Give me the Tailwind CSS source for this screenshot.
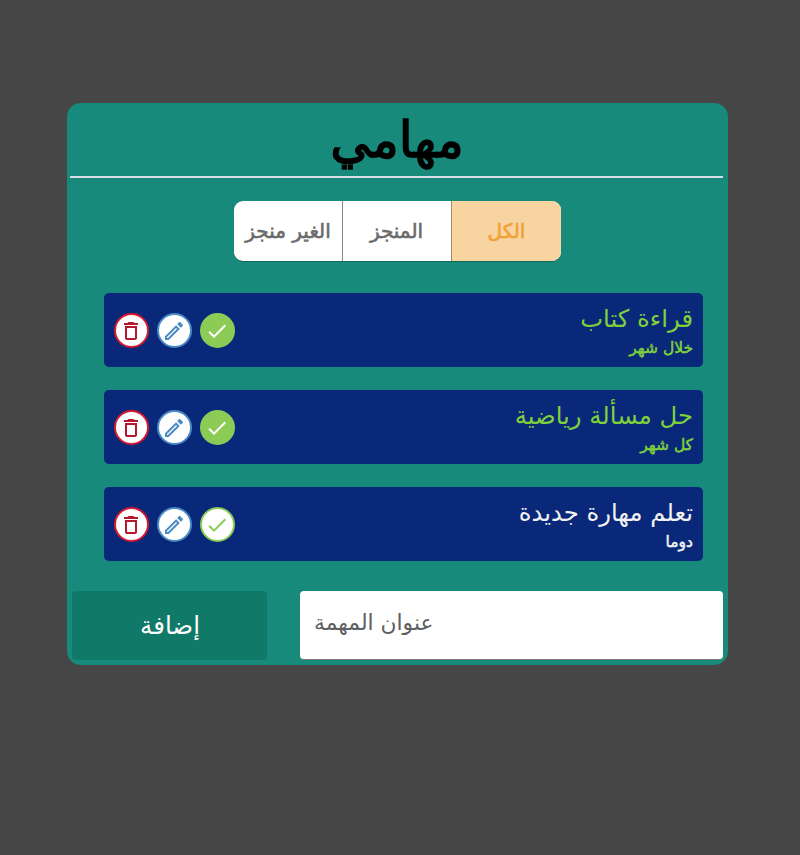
<!DOCTYPE html>
<html lang="ar">
<head>
<meta charset="utf-8">
<title>مهامي</title>
<script src="https://cdn.jsdelivr.net/npm/@tailwindcss/browser@4"></script>
</head>
<body class="h-[855px] overflow-hidden bg-[#464646] pt-[103px] pl-[67px] font-['DejaVu_Sans',sans-serif]">
<svg class="hidden">
  <symbol id="trash" viewBox="0 0 24 24"><path d="M6 19c0 1.1.9 2 2 2h8c1.1 0 2-.9 2-2V7H6v12zM8 9h8v10H8V9zm7.5-5l-1-1h-5l-1 1H5v2h14V4z"/></symbol>
  <symbol id="pencil" viewBox="0 0 24 24"><path d="M14.06 9.02l.92.92L5.92 19H5v-.92l9.06-9.06M17.66 3c-.25 0-.51.1-.7.29l-1.83 1.83 3.75 3.75 1.83-1.83c.39-.39.39-1.02 0-1.41l-2.34-2.34c-.2-.2-.45-.29-.71-.29zm-3.6 3.19L3 17.25V21h3.75L17.81 9.94l-3.75-3.75z"/></symbol>
  <symbol id="check" viewBox="0 0 24 24"><path d="M9 16.17 4.83 12l-1.42 1.41L9 19 21 7l-1.41-1.41z"/></symbol>
</svg>
<main class="flex h-[562px] w-[661px] flex-col rounded-[14px] bg-[#178a7b]">
  <h1 dir="rtl" class="mr-[5px] ml-[3px] h-[75px] border-b-2 border-[#dcdce6] pl-px text-center text-[50px] leading-[74px] text-black [-webkit-text-stroke:1.5px_#000]">مهامي</h1>
  <div class="mt-[23px] ml-[167px] flex h-[60px] w-[327px] overflow-hidden rounded-[9px] bg-white text-[20px] text-[#6b6b6b] shadow-[0_1px_0_rgba(0,0,0,0.25)] [-webkit-text-stroke:0.6px_currentColor]">
    <button dir="rtl" class="w-[108px] whitespace-nowrap">الغير منجز</button>
    <button dir="rtl" class="w-[109px] border-l border-[#858585] pr-px">المنجز</button>
    <button dir="rtl" class="w-[110px] border-l border-[#a58a68] bg-[#f8d4a1] text-[#f0a236]">الكل</button>
  </div>
  <ul class="mt-8 ml-[37px] flex w-[599px] flex-col gap-[23px]">
    <li class="flex h-[74px] items-center justify-between rounded-[5px] bg-[#0a2879] pr-[10px] pl-[10px] text-[#7fd13b]">
      <div class="flex gap-2">
        <button class="rounded-full border-2 border-[#d8192f] bg-white pt-1 pr-1 pb-[3px] pl-[3px]"><svg class="size-6 fill-[#b5172f]"><use href="#trash"/></svg></button>
        <button class="rounded-full border-2 border-[#4a8ac4] bg-white pt-1 pr-1 pb-[3px] pl-[3px]"><svg class="size-6 fill-[#4a8ac4]"><use href="#pencil"/></svg></button>
        <button class="rounded-full border-2 border-[#8bcb56] bg-[#8bcb56] pt-1 pr-1 pb-[3px] pl-[3px]"><svg class="size-6 fill-white"><use href="#check"/></svg></button>
      </div>
      <div dir="rtl" class="pt-[2px]">
        <h2 class="text-[24.3px] leading-[34px]">قراءة كتاب</h2>
        <p class="text-[15.5px] leading-6 [-webkit-text-stroke:0.5px_currentColor]">خلال شهر</p>
      </div>
    </li>
    <li class="flex h-[74px] items-center justify-between rounded-[5px] bg-[#0a2879] pr-[10px] pl-[10px] text-[#7fd13b]">
      <div class="flex gap-2">
        <button class="rounded-full border-2 border-[#d8192f] bg-white pt-1 pr-1 pb-[3px] pl-[3px]"><svg class="size-6 fill-[#b5172f]"><use href="#trash"/></svg></button>
        <button class="rounded-full border-2 border-[#4a8ac4] bg-white pt-1 pr-1 pb-[3px] pl-[3px]"><svg class="size-6 fill-[#4a8ac4]"><use href="#pencil"/></svg></button>
        <button class="rounded-full border-2 border-[#8bcb56] bg-[#8bcb56] pt-1 pr-1 pb-[3px] pl-[3px]"><svg class="size-6 fill-white"><use href="#check"/></svg></button>
      </div>
      <div dir="rtl" class="pt-[2px]">
        <h2 class="text-[24.3px] leading-[34px]">حل مسألة رياضية</h2>
        <p class="text-[15.5px] leading-6 [-webkit-text-stroke:0.5px_currentColor]">كل شهر</p>
      </div>
    </li>
    <li class="flex h-[74px] items-center justify-between rounded-[5px] bg-[#0a2879] pr-[10px] pl-[10px] text-[#f2f2f2]">
      <div class="flex gap-2">
        <button class="rounded-full border-2 border-[#d8192f] bg-white pt-1 pr-1 pb-[3px] pl-[3px]"><svg class="size-6 fill-[#b5172f]"><use href="#trash"/></svg></button>
        <button class="rounded-full border-2 border-[#4a8ac4] bg-white pt-1 pr-1 pb-[3px] pl-[3px]"><svg class="size-6 fill-[#4a8ac4]"><use href="#pencil"/></svg></button>
        <button class="rounded-full border-2 border-[#8bcb56] bg-white pt-1 pr-1 pb-[3px] pl-[3px]"><svg class="size-6 fill-[#8bcb56]"><use href="#check"/></svg></button>
      </div>
      <div dir="rtl" class="pt-[2px]">
        <h2 class="text-[24.3px] leading-[34px]">تعلم مهارة جديدة</h2>
        <p class="text-[15.5px] leading-6 [-webkit-text-stroke:0.5px_currentColor]">دوما</p>
      </div>
    </li>
  </ul>
  <div class="mt-[30px] mr-[5px] ml-[5px] flex h-[69px] justify-between">
    <button dir="rtl" class="w-[195px] rounded-[4px] bg-[#107967] pt-[2px] pl-px text-[24.5px] text-white">إضافة</button>
    <div class="flex w-[423px] rounded-[4px] border-b border-[#777] bg-white pt-[15px] pl-[14px] text-[21.8px] leading-[34px] text-[#606060]"><span dir="rtl">عنوان المهمة</span></div>
  </div>
</main>
</body>
</html>
